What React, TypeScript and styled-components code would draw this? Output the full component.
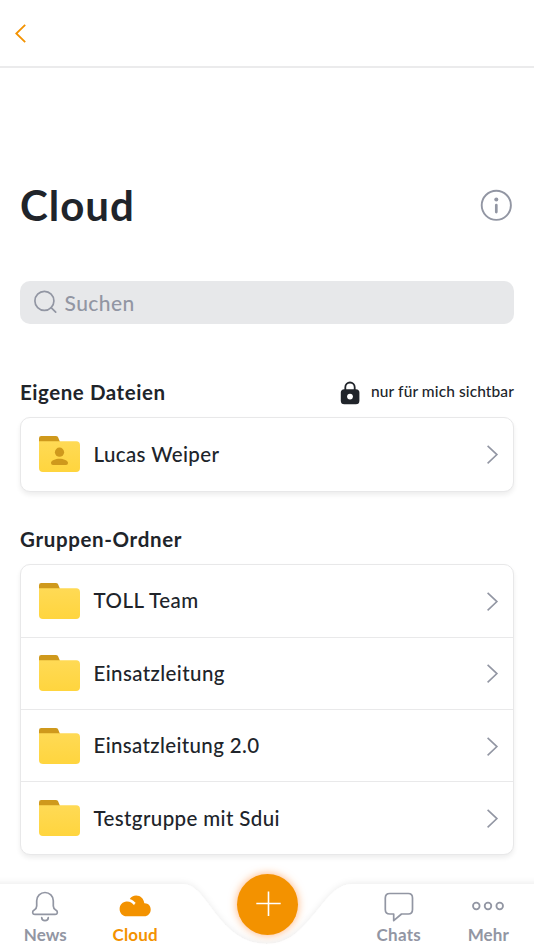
import React from 'react';
import styled, { createGlobalStyle } from 'styled-components';

const orange = '#f39200';
const ink = '#20242a';
const grey = '#9296a3';

const GlobalStyle = createGlobalStyle`
  *, *::before, *::after { box-sizing: border-box; }
  body { margin: 0; background: #fff; }
  svg { display: block; flex: none; overflow: visible; }
`;

const Screen = styled.div`
  display: flex;
  flex-direction: column;
  height: 950px;
  overflow: hidden;
  background: #fff;
  color: ${ink};
  font-family: Lato, 'Open Sans', sans-serif;
`;

const Header = styled.header`
  height: 68px;
  flex: none;
  display: flex;
  align-items: center;
  padding-left: 14px;
  border-bottom: 2px solid #ebebec;
`;

const IconButton = styled.button`
  display: flex;
  padding: 0;
  border: 0;
  background: none;
  cursor: pointer;
`;

const Content = styled.main`
  flex: 1;
  min-height: 0;
  padding: 105px 20px 0;
`;

const TitleBar = styled.div`
  display: flex;
  align-items: center;
  justify-content: space-between;
  height: 64px;
  padding-right: 2px;
`;

const Title = styled.h1`
  margin: 0;
  font-size: 42px;
  line-height: 62px;
  font-weight: 700;
  letter-spacing: 1px;
`;

const SearchBox = styled.label`
  display: flex;
  align-items: center;
  gap: 6.5px;
  height: 43px;
  margin-top: 44px;
  padding: 0 0 1px 14px;
  border-radius: 10px;
  background: #e7e8ea;
  color: ${grey};
  font-size: 21px;
  font-weight: 500;
  letter-spacing: 0.45px;
`;

const Section = styled.section<{ $top: number }>`
  margin-top: ${p => p.$top}px;
`;

const SectionHead = styled.div`
  display: flex;
  align-items: center;
  justify-content: space-between;
  height: 30px;
  margin-bottom: 10px;
`;

const SectionTitle = styled.h2<{ $track: number }>`
  margin: 0;
  font-size: 20.5px;
  line-height: 30px;
  font-weight: 700;
  letter-spacing: ${p => p.$track}px;
`;

const Visibility = styled.div`
  display: flex;
  align-items: center;
  gap: 11px;
  padding-top: 1px;
  font-size: 15.5px;
  font-weight: 500;
  letter-spacing: 0.1px;
`;

const VisibilityText = styled.span`
  line-height: 24px;
  padding-bottom: 4px;
`;

const Card = styled.div`
  border: 1.5px solid #e8e8e9;
  border-radius: 10px;
  background: #fff;
  box-shadow: 0 3px 5px rgba(0, 0, 0, 0.07);
`;

const FolderRow = styled.div<{ $height: number }>`
  display: flex;
  align-items: center;
  height: ${p => p.$height}px;
  padding: 0 15px 0 18px;

  & + & { border-top: 1.5px solid #e9e9ea; }
`;

const FolderName = styled.span<{ $track: number }>`
  flex: 1;
  margin-left: 12.5px;
  padding-bottom: 1px;
  font-size: 20.5px;
  line-height: 28px;
  font-weight: 500;
  letter-spacing: ${p => p.$track}px;
  white-space: nowrap;
`;

const NavBar = styled.nav`
  position: relative;
  flex: none;
  display: grid;
  grid-template-columns: 90.5px 89.5px 175px 87.5px 91.5px;
  height: 66px;
`;

const NavShape = styled.svg`
  position: absolute;
  inset: 0;
`;

const NavItem = styled.a<{ $active?: boolean; $track: number }>`
  position: relative;
  display: flex;
  flex-direction: column;
  align-items: center;
  color: ${p => (p.$active ? orange : grey)};
  font-size: 17px;
  line-height: 20px;
  font-weight: 700;
  letter-spacing: ${p => p.$track}px;
`;

const NavIcon = styled.span`
  display: flex;
  height: 41px;
  padding-top: 7px;
`;

const AddButton = styled.button`
  position: relative;
  display: flex;
  align-items: center;
  justify-content: center;
  justify-self: center;
  width: 61px;
  height: 61px;
  margin-top: -10.5px;
  padding: 0;
  border: 0;
  border-radius: 50%;
  background: ${orange};
  box-shadow: 0 0 9px rgba(255, 125, 30, 0.6);
  cursor: pointer;
`;

const BackIcon = () => (
  <svg width="13" height="20" viewBox="0 0 13 20" fill="none" stroke={orange} strokeWidth="1.8">
    <path d="M11.2 1.9 2.3 10.5l8.9 8.6" />
  </svg>
);

const ChevronIcon = () => (
  <svg width="12" height="20" viewBox="0 0 12 20" fill="none" stroke={grey} strokeWidth="1.6">
    <path d="M1.6 1.9 10.9 10.6l-9.3 8.7" />
  </svg>
);

const InfoIcon = () => (
  <svg width="32" height="32" viewBox="0 0 32 32" fill="none" stroke={grey}>
    <circle cx="16.3" cy="16.3" r="14.6" strokeWidth="1.9" />
    <circle cx="16.3" cy="10.6" r="2" fill={grey} stroke="none" />
    <path d="M16.3 16v7.1" strokeWidth="2.7" strokeLinecap="round" />
  </svg>
);

const SearchIcon = () => (
  <svg width="24" height="24" viewBox="0 0 24 24" fill="none" stroke={grey} strokeWidth="1.7">
    <circle cx="10.4" cy="10.9" r="9.5" />
    <path d="m17.1 17.6 4.6 4.6" strokeLinecap="round" />
  </svg>
);

const LockIcon = () => (
  <svg width="20" height="24" viewBox="0 0 20 24">
    <path d="M5.3 9.5V6.2a4.7 4.7 0 0 1 9.4 0v3.3" fill="none" stroke={ink} strokeWidth="1.8" />
    <rect x="0.8" y="8.3" width="18.6" height="15" rx="3.5" fill={ink} />
    <circle cx="10" cy="15.6" r="2.9" fill="#fff" />
  </svg>
);

const FolderIcon = ({ person }: { person?: boolean }) => (
  <svg width="42" height="38" viewBox="0 0 42 38">
    <defs>
      <linearGradient id="folder" x1="0" y1="0" x2="0" y2="1">
        <stop offset="0" stopColor="#ffda55" />
        <stop offset="1" stopColor="#ffd53e" />
      </linearGradient>
    </defs>
    <path d="M0 9V3.2Q0 1 2.2 1h14.7c1.5 0 2 .8 2.6 2.2L21 7v2Z" fill="#cf991c" />
    <path d="M0 6.3h37.2q3.8 0 3.8 3.8v23q0 3.9-3.9 3.9H3.9Q0 37 0 33.1Z" fill="url(#folder)" />
    {person && (
      <g fill="#cf991c">
        <circle cx="20.5" cy="17.2" r="4.6" />
        <path d="M12 28.1c0-2.6 4.5-4.3 8.5-4.3s8.5 1.7 8.5 4.3q0 2-2 2H14q-2 0-2-2Z" />
      </g>
    )}
  </svg>
);

const BellIcon = () => (
  <svg width="28" height="32" viewBox="0 0 28 32" fill="none" stroke={grey} strokeWidth="1.7" strokeLinecap="round" strokeLinejoin="round">
    <path d="M5.7 9.8a8.3 8.3 0 0 1 16.6 0v5.2c0 2.3.8 3 2.5 4.1 2.5 1.5 1.8 4.3-.7 4.3H3.9c-2.5 0-3.2-2.8-.7-4.3 1.7-1.1 2.5-1.8 2.5-4.1Z" />
    <path d="M10.7 26.6c.2 4 6.4 4 6.6 0" />
  </svg>
);

const CloudIcon = () => (
  <svg width="32" height="32" viewBox="0 0 32 32" fill={orange}>
    <path d="M7.8 25.3C3.5 25.3.6 22.1.6 18c0-4.5 3.2-7.4 6.9-7.6 3.4-.2 5.7 1.2 7.6 3.8.5-1.2.9-1.8 1.7-2.1-1.5-1.8-3.2-3.4-6-4.2 1.2-2.2 3.6-3.5 6.3-3.5 4.5 0 7.7 3.2 8.2 7.8 3.8-.3 6.4 2.7 6.4 6.2 0 3.8-2.7 6.9-6.5 6.9Z" />
  </svg>
);

const ChatIcon = () => (
  <svg width="30" height="32" viewBox="0 0 30 32" fill="none" stroke={grey} strokeWidth="1.7" strokeLinejoin="round">
    <path d="M5.8 2.5h18.5q4.2 0 4.2 4.5v11.5q0 4.5-4.2 4.5h-6.8l-7.8 6.7V23H5.8q-4.5 0-4.5-4.5V7q0-4.5 4.5-4.5Z" />
  </svg>
);

const MoreIcon = () => (
  <svg width="32" height="32" viewBox="0 0 32 32" fill="none" stroke={grey} strokeWidth="1.8">
    <circle cx="4.3" cy="15" r="3.3" />
    <circle cx="16" cy="15" r="3.3" />
    <circle cx="27.7" cy="15" r="3.3" />
  </svg>
);

const PlusIcon = () => (
  <svg width="26" height="26" viewBox="0 0 26 26" stroke="#fff" strokeWidth="1.6">
    <path d="M13.5.5v24.4M1.3 12.5h24.4" />
  </svg>
);

const groups = [
  { name: 'TOLL Team', track: 0.5, height: 71.5 },
  { name: 'Einsatzleitung', track: 0.4, height: 72.5 },
  { name: 'Einsatzleitung 2.0', track: 0.35, height: 72 },
  { name: 'Testgruppe mit Sdui', track: 0.38, height: 73 },
];

export default function App() {
  return (
    <Screen>
      <GlobalStyle />
      <Header>
        <IconButton aria-label="Zurück"><BackIcon /></IconButton>
      </Header>
      <Content>
        <TitleBar>
          <Title>Cloud</Title>
          <IconButton aria-label="Info"><InfoIcon /></IconButton>
        </TitleBar>
        <SearchBox><SearchIcon />Suchen</SearchBox>
        <Section $top={53}>
          <SectionHead>
            <SectionTitle $track={0.55}>Eigene Dateien</SectionTitle>
            <Visibility>
              <LockIcon />
              <VisibilityText>nur für mich sichtbar</VisibilityText>
            </Visibility>
          </SectionHead>
          <Card>
            <FolderRow $height={72.5}>
              <FolderIcon person />
              <FolderName $track={0.38}>Lucas Weiper</FolderName>
              <ChevronIcon />
            </FolderRow>
          </Card>
        </Section>
        <Section $top={32.5}>
          <SectionHead>
            <SectionTitle $track={0.65}>Gruppen-Ordner</SectionTitle>
          </SectionHead>
          <Card>
            {groups.map(group => (
              <FolderRow key={group.name} $height={group.height}>
                <FolderIcon />
                <FolderName $track={group.track}>{group.name}</FolderName>
                <ChevronIcon />
              </FolderRow>
            ))}
          </Card>
        </Section>
      </Content>
      <NavBar>
        <NavShape width="534" height="66" viewBox="0 0 534 66">
          <defs>
            <filter id="navShadow" x="-5%" y="-30%" width="110%" height="160%">
              <feDropShadow dx="0" dy="-1" stdDeviation="3" floodColor="#000" floodOpacity="0.08" />
            </filter>
          </defs>
          <path
            d="M-10 0H183C208 0 218 60 267 60C310 60 322 0 352 0H544V76H-10Z"
            fill="#fff"
            filter="url(#navShadow)"
          />
        </NavShape>
        <NavItem $track={0}><NavIcon><BellIcon /></NavIcon>News</NavItem>
        <NavItem $active $track={0.2}><NavIcon><CloudIcon /></NavIcon>Cloud</NavItem>
        <AddButton aria-label="Hinzufügen"><PlusIcon /></AddButton>
        <NavItem $track={0.25}><NavIcon><ChatIcon /></NavIcon>Chats</NavItem>
        <NavItem $track={0.1}><NavIcon><MoreIcon /></NavIcon>Mehr</NavItem>
      </NavBar>
    </Screen>
  );
}
